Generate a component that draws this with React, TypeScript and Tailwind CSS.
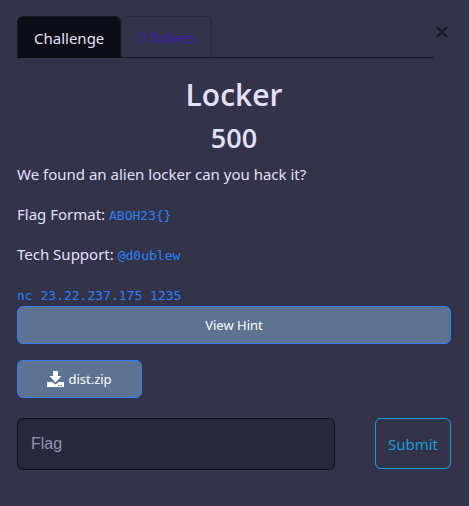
import { useState } from "react";
import type { ReactNode } from "react";

function Code({ children }: { children: ReactNode }) {
  return (
    <code className="font-['DejaVu_Sans_Mono',monospace] text-[13px] leading-none text-[#2d80fb]">
      {children}
    </code>
  );
}

function DownloadIcon() {
  return (
    <svg viewBox="0 0 17 16" className="h-4 w-[17px]" fill="currentColor" aria-hidden="true">
      <path d="M6 0h5v5h3.500L8.500 11.500 2.500 5H6z" />
      <path d="M0 11h5l3.500 2.600L12 11h5v5H0z" />
      <path d="M11 14.500h1.500M13.500 14.500H15" stroke="#5e7391" strokeWidth="1" />
    </svg>
  );
}

export default function App() {
  const [flag, setFlag] = useState("");

  return (
    <main className="min-h-screen bg-[#33334a] pt-4 pr-[18px] pb-9 pl-[17px] font-['Noto_Sans',sans-serif] text-[15px] leading-5 text-[#e4e1fb]">
      <header className="flex items-start">
        <nav className="flex h-[42px] flex-1 border-b border-[#181825]" role="tablist">
          <button
            role="tab"
            aria-selected="true"
            className="h-[42px] rounded-t-md border border-b-0 border-[#181825] bg-[#0c0d16] px-4"
          >
            Challenge
          </button>
          <button
            role="tab"
            aria-selected="false"
            className="h-[41px] rounded-t-md border border-b-0 border-[#2a2a3b] px-4 text-[#411eb5]"
          >
            0 Solves
          </button>
        </nav>
        <button aria-label="Close" className="mt-2 flex h-4 w-4 items-center justify-center text-[#1a1a27]">
          <svg viewBox="0 0 12 12" className="h-3 w-3" stroke="currentColor" strokeWidth="2.200">
            <path d="M1 1 11 11M11 1 1 11" />
          </svg>
        </button>
        <span className="w-px" />
      </header>

      <h1 className="mt-4 text-center font-['Open_Sans',sans-serif] text-3xl leading-[42px] font-semibold">
        Locker
      </h1>
      <h2 className="text-center font-['Open_Sans',sans-serif] text-[27px] leading-[44px] font-semibold">
        500
      </h2>

      <div className="mt-1 space-y-5">
        <p>We found an alien locker can you hack it?</p>
        <p>
          Flag Format: <Code>{"ABOH23{}"}</Code>
        </p>
        <p>
          Tech Support: <Code>@d0ublew</Code>
        </p>
        <p>
          <Code>nc 23.22.237.175 1235</Code>
        </p>
      </div>

      <button className="mt-0.5 flex h-[38px] w-full items-center justify-center rounded-md border border-[#2d80fb] bg-[#5e7391] text-[13px] text-white">
        View Hint
      </button>
      <a
        href="#dist.zip"
        className="mt-4 flex h-[38px] w-[125px] items-center justify-center gap-1 rounded-md border border-[#2d80fb] bg-[#5e7391] text-[13px] text-white"
      >
        <DownloadIcon />
        dist.zip
      </a>

      <form className="mt-5 flex gap-10" onSubmit={(event) => event.preventDefault()}>
        <input
          aria-label="Flag"
          placeholder="Flag"
          value={flag}
          onChange={(event) => setFlag(event.target.value)}
          className="h-[52px] min-w-0 flex-1 rounded-md border border-[#12131e] bg-[#29293d] px-[13px] font-['Liberation_Sans',sans-serif] text-base placeholder:text-[#9793b0]"
        />
        <button className="h-[51px] w-[76px] rounded-md border border-[#179fdb] text-[#179fdb]">
          Submit
        </button>
      </form>
    </main>
  );
}
